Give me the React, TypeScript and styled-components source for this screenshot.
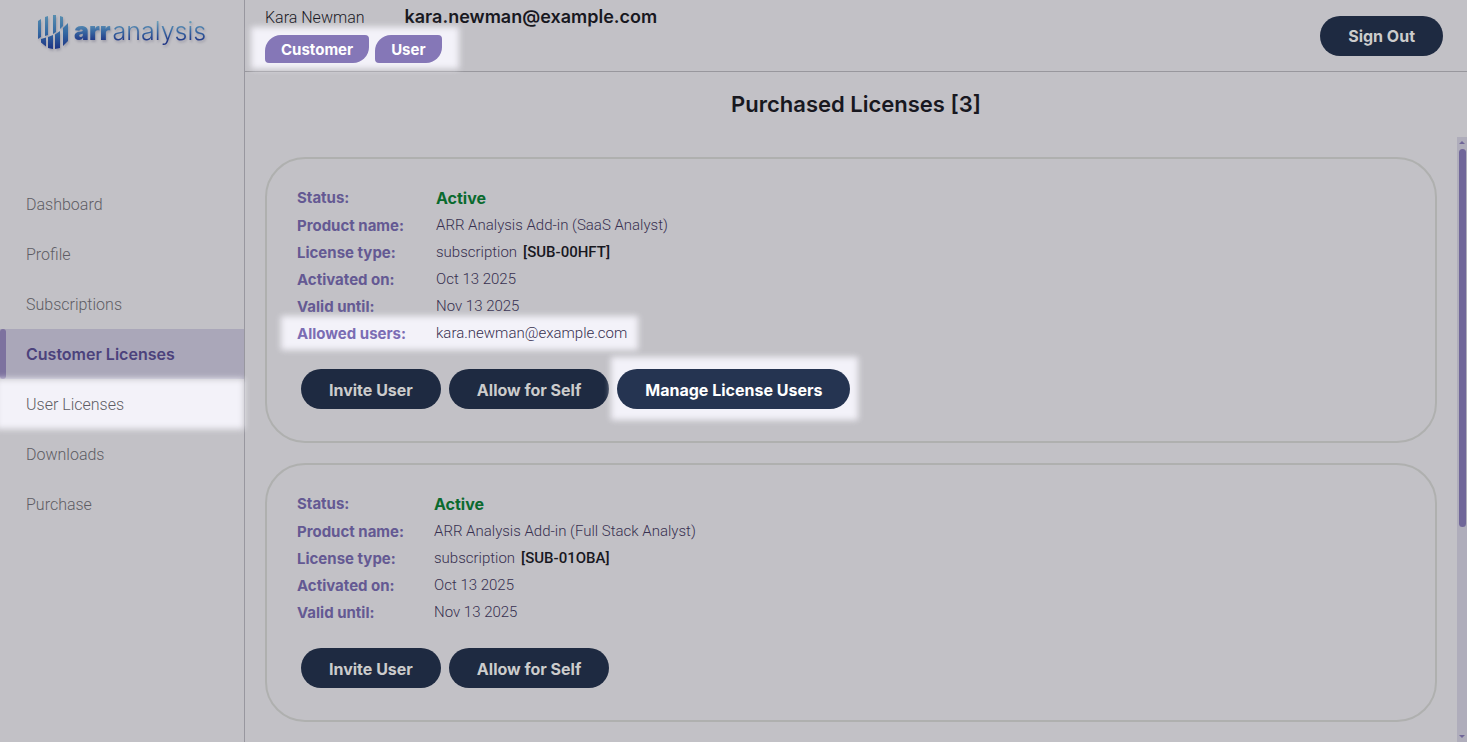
import React from "react";
import styled, { createGlobalStyle, css } from "styled-components";

const light = `Roboto, "Liberation Sans", sans-serif`;
const strong = `Inter, "Liberation Sans", sans-serif`;

const GlobalStyle = createGlobalStyle`
  *, *::before, *::after { box-sizing: border-box; }
  body {
    margin: 0;
    background: #c2c1c6;
    font: 300 16px/24px ${light};
    color: #18181f;
  }
`;

const spotlight = css<{ $spot?: boolean }>`
  ${(p) =>
    p.$spot &&
    css`
      position: relative;
      isolation: isolate;
      &::before {
        content: "";
        position: absolute;
        z-index: -1;
        inset: var(--spread);
        background: #f3f2f9;
        filter: blur(3px);
      }
    `}
`;

const Page = styled.div`
  display: grid;
  grid-template-columns: 245px minmax(0, 1fr);
  height: 100vh;
  overflow: hidden;
`;

const Sidebar = styled.aside`
  border-right: 1px solid #98979f;
`;

const Brand = styled.a`
  display: flex;
  align-items: flex-start;
  gap: 5px;
  height: 179px;
  padding: 14px 0 0 37px;
  text-decoration: none;
  filter: drop-shadow(1px 2px 1px rgba(60, 60, 90, 0.25));
`;

const Wordmark = styled.span`
  font: 300 25px/34px ${strong};
  background: linear-gradient(#6fa3bb 20%, #3a6ba4 50%, #1f3585 80%);
  background-clip: text;
  -webkit-background-clip: text;
  color: transparent;
`;

const WordmarkBold = styled.b`
  margin-right: 2px;
  font-weight: 900;
`;

const Nav = styled.nav`
  display: flex;
  flex-direction: column;
`;

const NavLink = styled.a<{ $active?: boolean; $spot?: boolean }>`
  --spread: 0 0 0 -4px;
  display: flex;
  align-items: center;
  height: 50px;
  padding: 2px 0 0 26px;
  color: #5e5d64;
  text-decoration: none;
  ${spotlight}
  ${(p) =>
    p.$active &&
    css`
      position: relative;
      padding-top: 0;
      background: #aaa7b9;
      color: #4c427c;
      font: 600 16px/24px ${strong};
      &::before {
        content: "";
        position: absolute;
        inset: 0 auto 0 0;
        width: 6px;
        border-radius: 3px;
        background: #7d729f;
      }
    `}
`;

const Main = styled.div`
  display: flex;
  flex-direction: column;
  min-height: 0;
`;

const TopBar = styled.header`
  display: flex;
  justify-content: space-between;
  height: 72px;
  padding: 5px 24px 0 20px;
  border-bottom: 1px solid #98979d;
`;

const Identity = styled.div`
  display: flex;
  align-items: baseline;
  gap: 40px;
`;

const Email = styled.strong`
  font: 600 18px/24px ${strong};
`;

const Badges = styled.div<{ $spot?: boolean }>`
  --spread: -8px -17px -6px -14px;
  display: flex;
  gap: 6px;
  width: max-content;
  margin-top: 5px;
  ${spotlight}
`;

const Badge = styled.span`
  height: 28px;
  padding: 0 16px;
  border-radius: 16px 4px 16px 4px;
  background: #8577b7;
  color: #fff;
  font: 700 15px/29px ${strong};
`;

const Button = styled.button<{ $spot?: boolean }>`
  --spread: -12px -8px -11px -6px;
  height: 40px;
  padding: 1px 28px 0;
  border: 0;
  border-radius: 20px;
  background: #1e2a41;
  color: #cccccc;
  font: 700 16px/24px ${strong};
  white-space: nowrap;
  ${(p) =>
    p.$spot &&
    css`
      background: none;
      color: #fff;
      &::after {
        content: "";
        position: absolute;
        z-index: -1;
        inset: 0;
        border-radius: 20px;
        background: #253451;
      }
    `}
  ${spotlight}
`;

const SignOut = styled(Button)`
  margin-top: 11px;
  padding-top: 0;
`;

const Title = styled.h1`
  margin: 0;
  padding: 16px 0 17px;
  text-align: center;
  font: 600 22px/32px ${strong};
`;

const ListArea = styled.main`
  flex: 1;
  display: flex;
  min-height: 0;
`;

const Cards = styled.div`
  flex: 1;
  display: flex;
  flex-direction: column;
  gap: 20px;
  padding: 20px;
  overflow: hidden;
`;

const Card = styled.section`
  flex: none;
  padding: 25px 30px 32px;
  border: 2px solid #afb0af;
  border-radius: 40px;
`;

const Details = styled.dl`
  display: grid;
  grid-template-columns: max-content 1fr;
  width: max-content;
  margin: 0;
`;

const Row = styled.div<{ $spot?: boolean }>`
  --spread: -4px 30px -3px -16px;
  display: grid;
  grid-template-columns: subgrid;
  grid-column: 1 / -1;
  column-gap: 30px;
  font-size: 15px;
  line-height: 27px;
  ${spotlight}
`;

const Label = styled.dt<{ $spot?: boolean }>`
  color: ${(p) => (p.$spot ? "#7b6db4" : "#645993")};
  font: 700 15px/27px ${strong};
`;

const Value = styled.dd`
  margin: 0;
  color: #373050;
`;

const Status = styled.strong`
  display: block;
  color: #0a6a2e;
  font: 700 16px/28px ${strong};
`;

const Code = styled.span`
  margin-left: 6px;
  color: #18181f;
  font-weight: 500;
`;

const Actions = styled.div`
  display: flex;
  gap: 8px;
  padding: 22px 4px 0;
`;

const Scrollbar = styled.div`
  display: flex;
  flex-direction: column;
  align-items: center;
  justify-content: space-between;
  width: 10px;
  padding: 4px 1px;
  background: #afadbb;
`;

const ScrollTrack = styled.div`
  flex: 1;
  width: 7px;
  padding: 5px 0;
`;

const ScrollThumb = styled.div`
  height: 65%;
  border-radius: 4px;
  background: #706699;
`;

const Arrow = ({ down }: { down?: boolean }) => (
  <svg width="6" height="3" viewBox="0 0 6 3" fill="#706699" aria-hidden="true">
    <path d={down ? "M0 0h6L3 3z" : "M0 3h6L3 0z"} />
  </svg>
);

const LogoMark = () => (
  <svg width="32" height="36" viewBox="0 0 32 36" aria-hidden="true">
    <defs>
      <linearGradient id="bars" gradientUnits="userSpaceOnUse" x1="0" y1="0" x2="0" y2="36">
        <stop offset="0" stopColor="#5b91b0" />
        <stop offset="0.5" stopColor="#356aa3" />
        <stop offset="1" stopColor="#1a2f82" />
      </linearGradient>
    </defs>
    <g fill="url(#bars)">
      <path d="M1 7l3-2v18l-3 2z" />
      <path d="M8 3l3-1v19l-3 1z" />
      <path d="M16 1h3v17l-3 2z" />
      <path d="M23 2l3 1v9l-3 3z" />
      <path d="M4 25l5-1.500v9l-5-4z" />
      <path d="M11 23l5-2v14l-5-1z" />
      <path d="M18 20.500l5-3.500v17l-5 1z" />
      <path d="M26 14l5-5v18l-5 5z" />
    </g>
  </svg>
);

type License = {
  product: string;
  code: string;
  allowed?: string;
};

const licenses: License[] = [
  {
    product: "ARR Analysis Add-in (SaaS Analyst)",
    code: "[SUB-00HFT]",
    allowed: "kara.newman@example.com",
  },
  { product: "ARR Analysis Add-in (Full Stack Analyst)", code: "[SUB-01OBA]" },
];

const LicenseCard = ({ product, code, allowed }: License) => (
  <Card>
    <Details>
      <Row>
        <Label>Status:</Label>
        <Value>
          <Status>Active</Status>
        </Value>
      </Row>
      <Row>
        <Label>Product name:</Label>
        <Value>{product}</Value>
      </Row>
      <Row>
        <Label>License type:</Label>
        <Value>
          subscription<Code>{code}</Code>
        </Value>
      </Row>
      <Row>
        <Label>Activated on:</Label>
        <Value>Oct 13 2025</Value>
      </Row>
      <Row>
        <Label>Valid until:</Label>
        <Value>Nov 13 2025</Value>
      </Row>
      {allowed && (
        <Row $spot>
          <Label $spot>Allowed users:</Label>
          <Value>{allowed}</Value>
        </Row>
      )}
    </Details>
    <Actions>
      <Button type="button">Invite User</Button>
      <Button type="button">Allow for Self</Button>
      {allowed && (
        <Button type="button" $spot>
          Manage License Users
        </Button>
      )}
    </Actions>
  </Card>
);

export default function App() {
  return (
    <Page>
      <GlobalStyle />
      <Sidebar>
        <Brand href="#">
          <LogoMark />
          <Wordmark>
            <WordmarkBold>arr</WordmarkBold>analysis
          </Wordmark>
        </Brand>
        <Nav>
          <NavLink href="#">Dashboard</NavLink>
          <NavLink href="#">Profile</NavLink>
          <NavLink href="#">Subscriptions</NavLink>
          <NavLink href="#" $active aria-current="page">
            Customer Licenses
          </NavLink>
          <NavLink href="#" $spot>
            User Licenses
          </NavLink>
          <NavLink href="#">Downloads</NavLink>
          <NavLink href="#">Purchase</NavLink>
        </Nav>
      </Sidebar>
      <Main>
        <TopBar>
          <div>
            <Identity>
              <span>Kara Newman</span>
              <Email>kara.newman@example.com</Email>
            </Identity>
            <Badges $spot>
              <Badge>Customer</Badge>
              <Badge>User</Badge>
            </Badges>
          </div>
          <SignOut type="button">Sign Out</SignOut>
        </TopBar>
        <Title>Purchased Licenses [3]</Title>
        <ListArea>
          <Cards>
            {licenses.map((item) => (
              <LicenseCard key={item.code} {...item} />
            ))}
          </Cards>
          <Scrollbar>
            <Arrow />
            <ScrollTrack>
              <ScrollThumb />
            </ScrollTrack>
            <Arrow down />
          </Scrollbar>
        </ListArea>
      </Main>
    </Page>
  );
}
